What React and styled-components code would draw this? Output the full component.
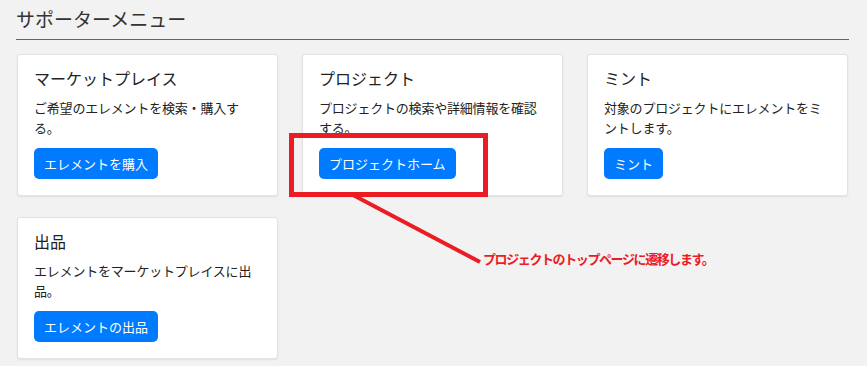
import React from 'react';
import styled, { createGlobalStyle } from 'styled-components';

const colors = {
  page: '#f2f2f2',
  text: '#333333',
  blue: '#007bff',
  red: '#ec1c24',
  border: '#e2e2e2',
};

const GlobalStyle = createGlobalStyle`
  html, body {
    margin: 0;
    padding: 0;
    background: ${colors.page};
  }
  body {
    font-family: "Noto Sans CJK JP", "Noto Sans", sans-serif;
    color: ${colors.text};
  }
`;

const Page = styled.div`
  position: relative;
  width: 867px;
  height: 366px;
  box-sizing: border-box;
  padding: 0 18px 0 16px;
  overflow: hidden;
`;

const Header = styled.h1`
  margin: 0;
  padding: 5px 0 6px;
  font-size: 19px;
  font-weight: 400;
  line-height: 28px;
  color: ${colors.text};
  border-bottom: 1px solid ${colors.blue};
`;

const Grid = styled.div`
  display: grid;
  grid-template-columns: repeat(3, 261px);
  column-gap: 24px;
  row-gap: 21px;
  margin-top: 14px;
  padding: 0 1px;
`;

const Card = styled.div`
  display: flex;
  flex-direction: column;
  align-items: flex-start;
  box-sizing: border-box;
  height: 142px;
  padding: 12px 16px 16px;
  background: #ffffff;
  border: 1px solid ${colors.border};
  border-radius: 3px;
  box-shadow: 0 1px 2px rgba(0, 0, 0, 0.08);
`;

const CardTitle = styled.h5`
  margin: 0 0 9px;
  font-size: 16px;
  font-weight: 400;
  line-height: 22px;
  color: #222;
`;

const CardText = styled.p`
  margin: 0;
  font-size: 13px;
  line-height: 20px;
  letter-spacing: -0.2px;
  white-space: pre-line;
  color: #222;
`;

const ActionButton = styled.button`
  margin-top: auto;
  height: 31px;
  padding: 0 10px;
  border: none;
  border-radius: 5px;
  background: ${colors.blue};
  color: #ffffff;
  font-family: inherit;
  font-size: 13px;
  line-height: 31px;
  cursor: pointer;
`;

// annotation layer (sits over the page)
const Highlight = styled.div`
  position: absolute;
  left: 289px;
  top: 133px;
  width: 199px;
  height: 64px;
  box-sizing: border-box;
  border: 5px solid ${colors.red};
`;

const Leader = styled.svg`
  position: absolute;
  left: 0;
  top: 0;
  pointer-events: none;
`;

const Note = styled.span`
  position: absolute;
  left: 483px;
  top: 250px;
  font-size: 13px;
  font-weight: 700;
  line-height: 18px;
  letter-spacing: -1.4px;
  color: ${colors.red};
  white-space: nowrap;
`;

const menu = [
  {
    title: 'マーケットプレイス',
    text: 'ご希望のエレメントを検索・購入す\nる。',
    action: 'エレメントを購入',
  },
  {
    title: 'プロジェクト',
    text: 'プロジェクトの検索や詳細情報を確認\nする。',
    action: 'プロジェクトホーム',
  },
  {
    title: 'ミント',
    text: '対象のプロジェクトにエレメントをミ\nントします。',
    action: 'ミント',
  },
  {
    title: '出品',
    text: 'エレメントをマーケットプレイスに出\n品。',
    action: 'エレメントの出品',
  },
];

export default function App() {
  return (
    <Page>
      <GlobalStyle />
      <Header>サポーターメニュー</Header>
      <Grid>
        {menu.map((item) => (
          <Card key={item.title}>
            <CardTitle>{item.title}</CardTitle>
            <CardText>{item.text}</CardText>
            <ActionButton>{item.action}</ActionButton>
          </Card>
        ))}
      </Grid>

      <Highlight />
      <Leader width="867" height="366">
        <line x1="353" y1="195" x2="480" y2="262" stroke={colors.red} strokeWidth="4" />
      </Leader>
      <Note>プロジェクトのトップページに遷移します。</Note>
    </Page>
  );
}
